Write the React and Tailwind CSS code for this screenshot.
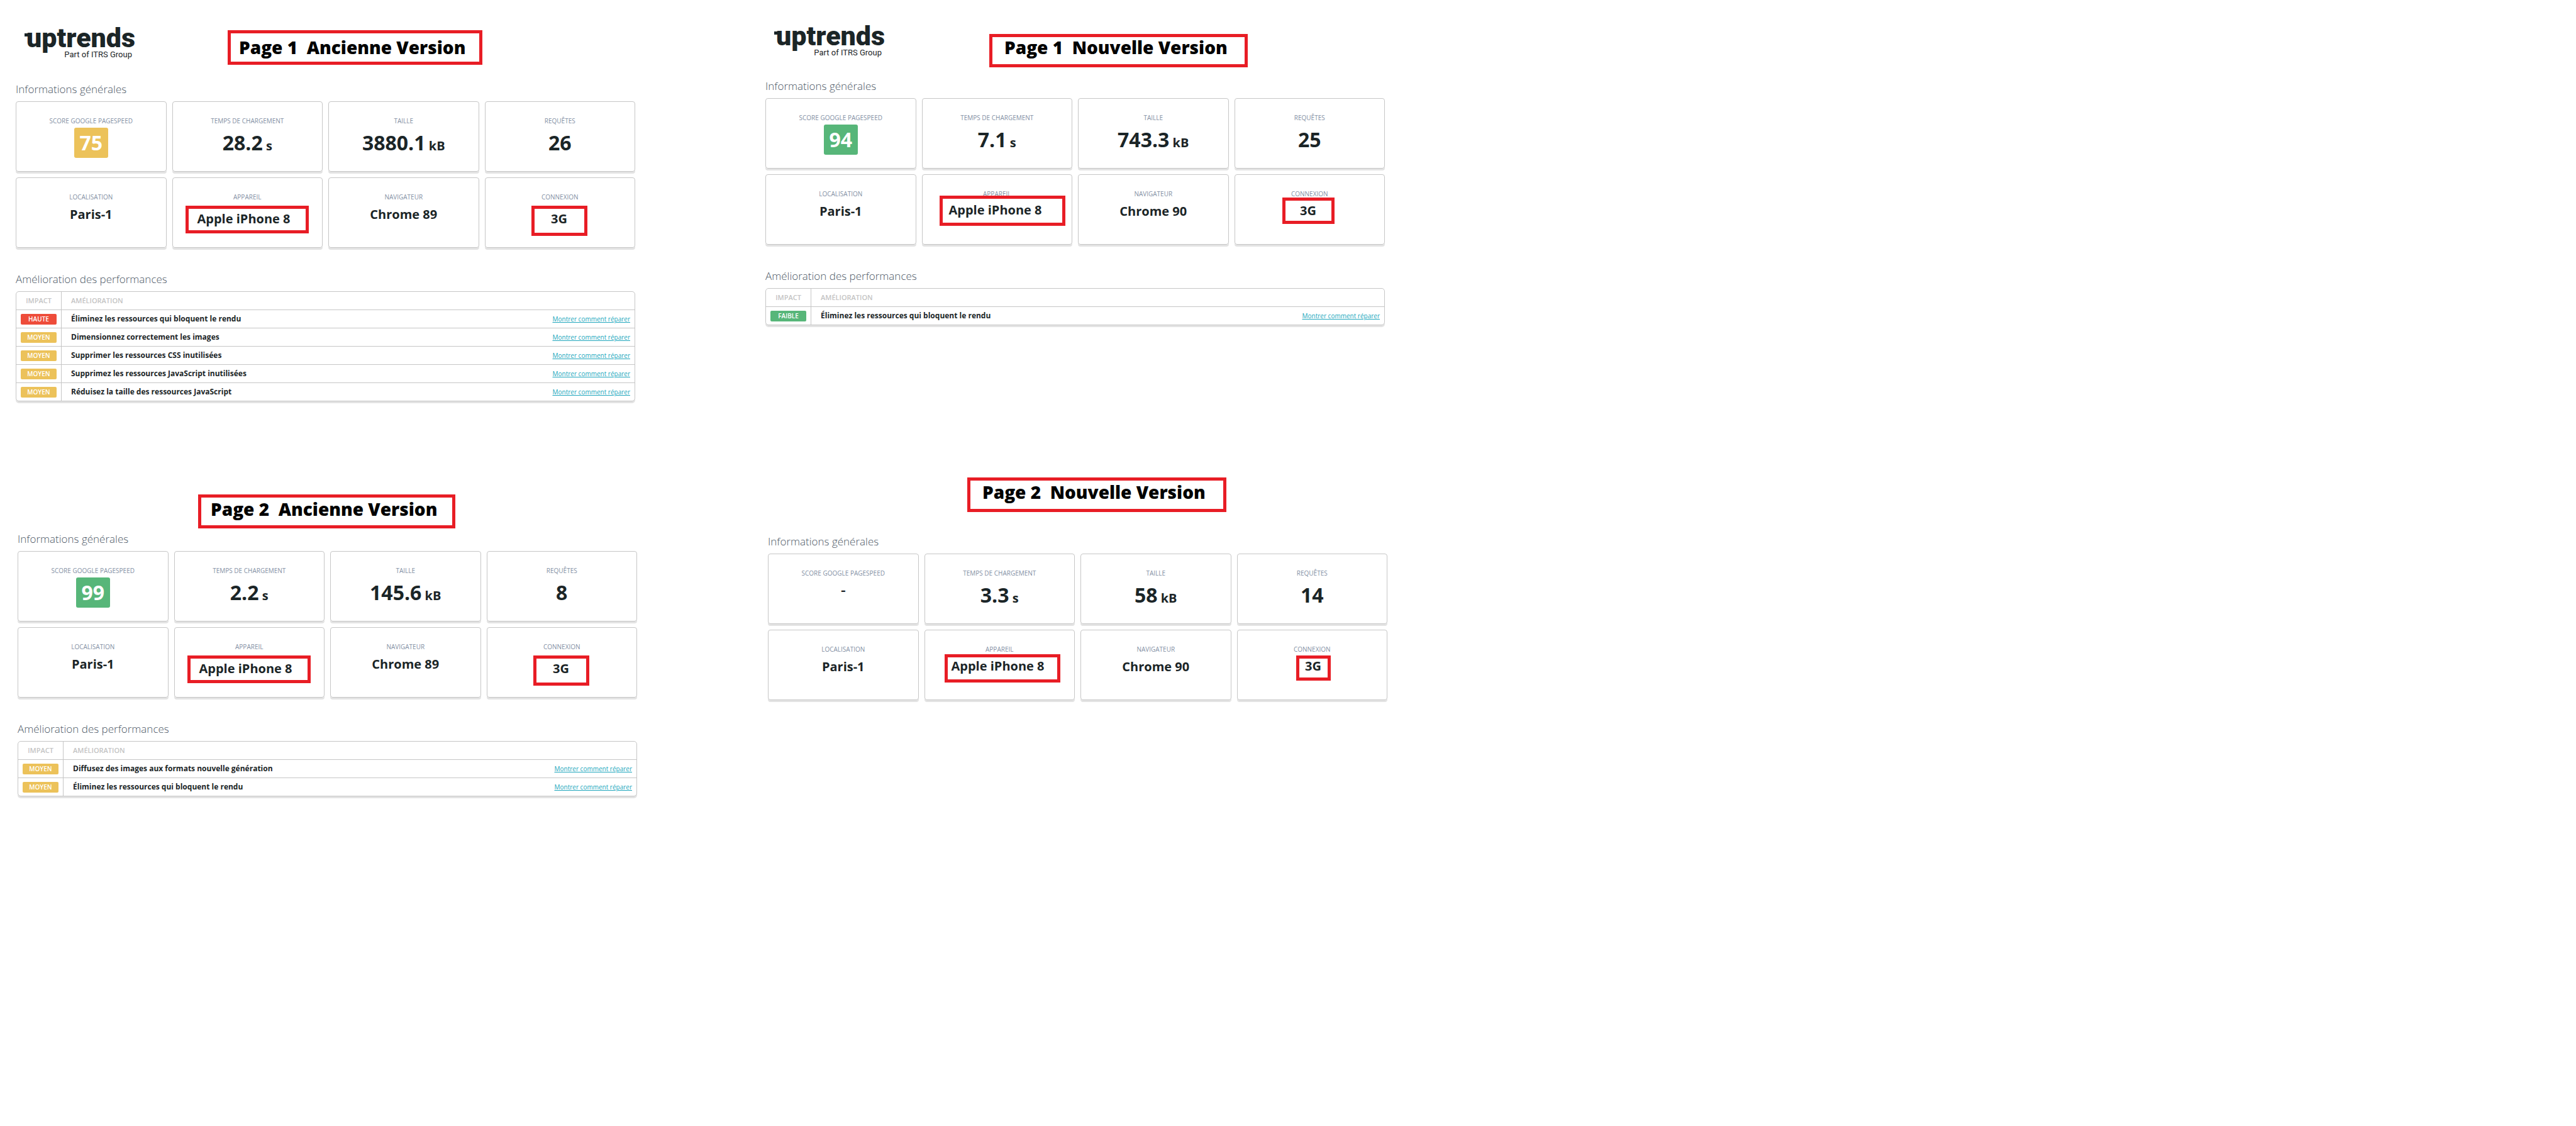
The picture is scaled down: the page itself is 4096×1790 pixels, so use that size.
const IMPACT = {
  HAUTE: "bg-[#ee4c3a]",
  MOYEN: "bg-[#ecc25a]",
  FAIBLE: "bg-[#57b679]",
};

const SCORE = {
  medium: "bg-[#ecc25a]",
  good: "bg-[#57b679]",
};

function Logo({ className }) {
  return (
    <div className={`relative ml-[17px] w-[168px] shrink-0 text-right font-['Roboto'] text-[#1b2527] ${className}`}>
      <svg className="absolute top-[12px] -left-[3px] h-[5px] w-[8px]" viewBox="0 0 8 5" aria-hidden="true">
        <rect width="8" height="5" fill="#1b2527" />
      </svg>
      <div className="text-[43px] leading-[39px] font-black">uptrends</div>
      <div className="text-[13px] leading-[14px]">Part of ITRS Group</div>
    </div>
  );
}

function Title({ className, children }) {
  return (
    <h1
      className={`shrink-0 border-5 border-[#e81d25] text-[28px] leading-8 font-extrabold whitespace-pre text-black ${className}`}
    >
      {children}
    </h1>
  );
}

function Heading({ children }) {
  return <h2 className="mb-[5px] text-[17px] leading-7 font-light text-[#4d5866]">{children}</h2>;
}

function Card({ label, children }) {
  return (
    <div className="relative flex h-28 flex-col items-center rounded-[4px] border border-[#c6c6c6] pt-[22px] shadow-[0_3px_0_#e3e3e3]">
      <div className="text-[10px] leading-4 text-[#8390a4]">{label}</div>
      {children}
    </div>
  );
}

function Metric({ value, unit }) {
  return (
    <div className="mt-[3px] text-[32px] leading-[48px] font-bold">
      {value}
      {unit && <span className="text-[20px]"> {unit}</span>}
    </div>
  );
}

function Score({ value, tone }) {
  if (!tone) return <div className="mt-[6px] text-[24px] leading-6 font-semibold">{value}</div>;
  return (
    <div className={`mt-[3px] w-[54px] rounded-[3px] text-center text-[32px] leading-[48px] font-bold text-white ${SCORE[tone]}`}>
      {value}
    </div>
  );
}

function Fact({ value, frame }) {
  if (!frame) return <div className="mt-2 text-[20px] leading-6 font-bold">{value}</div>;
  return (
    <div className={`absolute border-5 border-[#e81d25] bg-white text-[20px] leading-6 font-bold whitespace-nowrap ${frame}`}>
      {value}
    </div>
  );
}

function Improvements({ rows }) {
  return (
    <>
      <div className="mt-9">
        <Heading>Amélioration des performances</Heading>
      </div>
      <div className="overflow-hidden rounded-[5px] border border-[#c6c6c6] shadow-[0_3px_0_#e3e3e3]">
        <table className="w-full border-separate border-spacing-0 text-left">
          <thead>
            <tr className="h-7 text-[11px] leading-4 text-[#c4c4c4]">
              <th className="w-[72px] border-r border-[#c6c6c6] p-0 text-center font-semibold">IMPACT</th>
              <th className="p-0 pl-[15px] font-semibold">AMÉLIORATION</th>
              <th className="p-0" aria-label="Action" />
            </tr>
          </thead>
          <tbody>
            {rows.map(([impact, text]) => (
              <tr key={text} className="h-[29px]">
                <td className="border-t border-r border-[#c6c6c6] px-[7px] py-0">
                  <div className={`rounded-[2px] text-center text-[10px] leading-[17px] font-semibold text-white ${IMPACT[impact]}`}>
                    {impact}
                  </div>
                </td>
                <td className="border-t border-[#c6c6c6] p-0 pl-[15px] text-[12px] leading-4 font-bold">{text}</td>
                <td className="border-t border-[#c6c6c6] p-0 pr-[7px] text-right text-[10px] leading-4">
                  <a href="#" className="text-[#22a7bd] underline">
                    Montrer comment réparer
                  </a>
                </td>
              </tr>
            ))}
          </tbody>
        </table>
      </div>
    </>
  );
}

function Report({ report }) {
  const { title, headerClass, titleClass, logoClass, score, tone, time, size, requests, browser, deviceFrame, networkFrame, rows } = report;
  return (
    <section>
      <header className={`flex items-start ${headerClass}`}>
        {logoClass && <Logo className={logoClass} />}
        <Title className={titleClass}>{title}</Title>
      </header>
      <Heading>Informations générales</Heading>
      <div className="grid grid-cols-4 gap-[9px]">
        <Card label="SCORE GOOGLE PAGESPEED">
          <Score value={score} tone={tone} />
        </Card>
        <Card label="TEMPS DE CHARGEMENT">
          <Metric value={time} unit="s" />
        </Card>
        <Card label="TAILLE">
          <Metric value={size} unit="kB" />
        </Card>
        <Card label="REQUÊTES">
          <Metric value={requests} />
        </Card>
        <Card label="LOCALISATION">
          <Fact value="Paris-1" />
        </Card>
        <Card label="APPAREIL">
          <Fact value="Apple iPhone 8" frame={deviceFrame} />
        </Card>
        <Card label="NAVIGATEUR">
          <Fact value={browser} />
        </Card>
        <Card label="CONNEXION">
          <Fact value="3G" frame={networkFrame} />
        </Card>
      </div>
      {rows && <Improvements rows={rows} />}
    </section>
  );
}

const oldDevice = "left-5 top-11 h-11 w-[196px] pl-[14px] pt-1";
const oldNetwork = "left-[73px] top-11 h-12 w-[89px] text-center pt-1";

const page1Old = {
  title: "Page 1  Ancienne Version",
  headerClass: "min-h-32",
  logoClass: "mt-[41px]",
  titleClass: "mt-12 ml-[152px] h-[55px] w-[405px] pl-[13px] pt-[6px]",
  score: "75",
  tone: "medium",
  time: "28.2",
  size: "3880.1",
  requests: "26",
  browser: "Chrome 89",
  deviceFrame: oldDevice,
  networkFrame: oldNetwork,
  rows: [
    ["HAUTE", "Éliminez les ressources qui bloquent le rendu"],
    ["MOYEN", "Dimensionnez correctement les images"],
    ["MOYEN", "Supprimer les ressources CSS inutilisées"],
    ["MOYEN", "Supprimez les ressources JavaScript inutilisées"],
    ["MOYEN", "Réduisez la taille des ressources JavaScript"],
  ],
};

const page1New = {
  title: "Page 1  Nouvelle Version",
  headerClass: "min-h-[123px]",
  logoClass: "mt-[38px]",
  titleClass: "mt-[54px] ml-[171px] h-[53px] w-[411px] pl-[19px]",
  score: "94",
  tone: "good",
  time: "7.1",
  size: "743.3",
  requests: "25",
  browser: "Chrome 90",
  deviceFrame: "left-[27px] top-[33px] h-12 w-[200px] pl-[10px] pt-[6px]",
  networkFrame: "left-[75px] top-9 h-[42px] w-[83px] text-center pt-1",
  rows: [["FAIBLE", "Éliminez les ressources qui bloquent le rendu"]],
};

const page2Old = {
  title: "Page 2  Ancienne Version",
  headerClass: "min-h-[123px]",
  titleClass: "mt-[66px] ml-[287px] h-[54px] w-[409px] pl-[15px] pt-[2px]",
  score: "99",
  tone: "good",
  time: "2.2",
  size: "145.6",
  requests: "8",
  browser: "Chrome 89",
  deviceFrame: oldDevice,
  networkFrame: oldNetwork,
  rows: [
    ["MOYEN", "Diffusez des images aux formats nouvelle génération"],
    ["MOYEN", "Éliminez les ressources qui bloquent le rendu"],
  ],
};

const page2New = {
  title: "Page 2  Nouvelle Version",
  headerClass: "min-h-[127px]",
  titleClass: "mt-[39px] ml-[317px] h-[55px] w-[412px] pl-[19px] pt-[2px]",
  score: "-",
  time: "3.3",
  size: "58",
  requests: "14",
  browser: "Chrome 90",
  deviceFrame: "left-[31px] top-[38px] h-[45px] w-[184px] pl-[6px] pt-[2px]",
  networkFrame: "left-[93px] top-10 h-10 w-[55px] text-center",
};

export default function App() {
  return (
    <main className="flex min-h-screen flex-col gap-[82px] bg-white font-['Open_Sans','Noto_Sans',sans-serif] text-[#1b2527]">
      <div className="grid grid-cols-[985fr_985fr_1687fr] gap-x-[207px] pl-[25px]">
        <Report report={page1Old} />
        <Report report={page1New} />
      </div>
      <div className="grid grid-cols-[985fr_985fr_1682fr] gap-x-[208px] pl-7">
        <Report report={page2Old} />
        <Report report={page2New} />
      </div>
    </main>
  );
}
